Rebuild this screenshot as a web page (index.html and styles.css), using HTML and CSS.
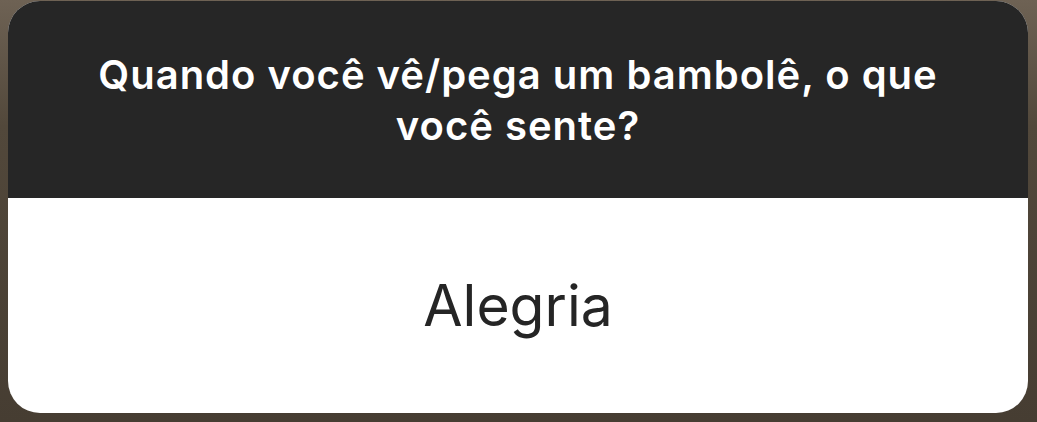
FILE: index.html
```html
<!DOCTYPE html>
<html lang="pt">
<head>
    <meta charset="UTF-8">
    <meta name="viewport" content="width=device-width, initial-scale=1.0">
    <title>Pergunta</title>
    <link rel="stylesheet" href="styles.css">
</head>
<body>

<div class="question-card">
    <div class="question-header">
        <h2>Quando você vê/pega um bambolê, o que você sente?</h2>
    </div>
    <div class="question-answer">
        <p>Alegria</p>
    </div>
</div>

</body>
</html>
```

FILE: styles.css
```css
body {
    margin: 0;
    height: 422px;
    font-family: Inter, "Noto Sans", sans-serif;
    background: linear-gradient(180deg, #6e6254 0%, #52483b 30%, #463d32 100%);
    padding: 1px 9px 0 8px;
    box-sizing: border-box;
}

.question-card {
    height: 412px;
    border-radius: 32px;
    overflow: hidden;
    display: flex;
    flex-direction: column;
    background-color: #fff;
}

.question-header {
    height: 197px;
    background-color: #262626;
    display: flex;
    align-items: center;
    justify-content: center;
    padding: 0 80px;
    box-sizing: border-box;
}

.question-header h2 {
    margin: 0;
    color: #fff;
    font-size: 40px;
    font-weight: 600;
    letter-spacing: 1px;
    line-height: 51px;
    text-align: center;
}

.question-answer {
    flex: 1;
    display: flex;
    align-items: center;
    justify-content: center;
}

.question-answer p {
    margin: 0;
    color: #252525;
    font-size: 57px;
    font-weight: 400;
}
```
